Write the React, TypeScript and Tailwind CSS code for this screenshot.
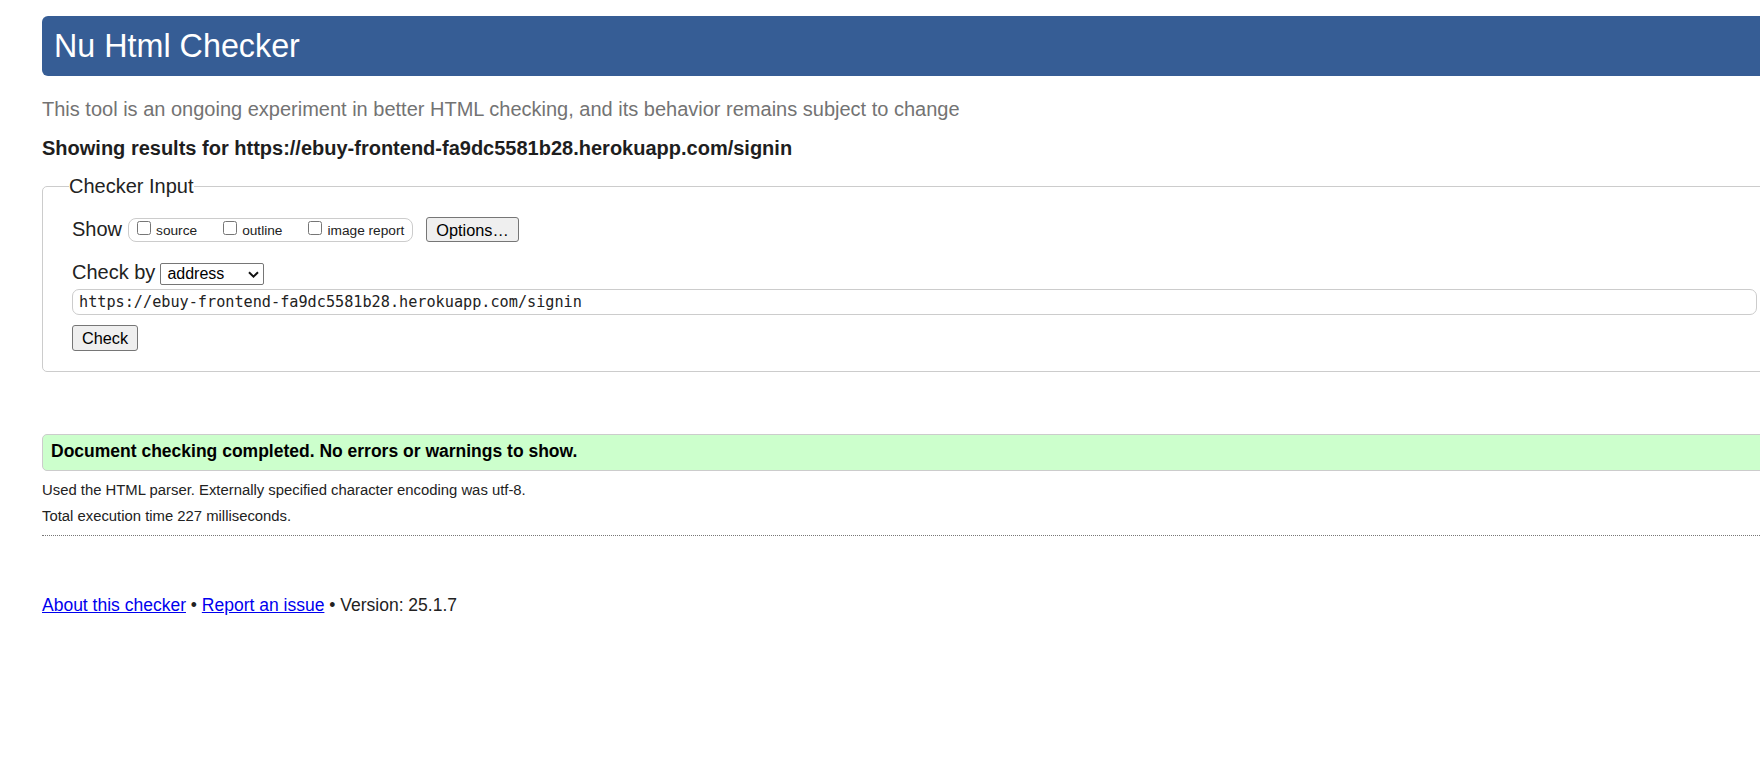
import { useState } from 'react';

const checkedUrl = 'https://ebuy-frontend-fa9dc5581b28.herokuapp.com/signin';

const showOptions = [
  { key: 'source', label: 'source' },
  { key: 'outline', label: 'outline' },
  { key: 'image', label: 'image report' },
];

const App = () => {
  const [show, setShow] = useState<Record<string, boolean>>({});
  const [checkBy, setCheckBy] = useState('address');
  const [doc, setDoc] = useState(checkedUrl);

  return (
    <div className="h-screen w-screen overflow-hidden bg-white font-['Liberation_Sans',Arial,sans-serif] text-[#222]">
      <div className="ml-[42px] w-[1742px] pt-[16px]">
        {/* Header */}
        <h1 className="flex h-[60px] items-center rounded-[6px] bg-[#365d95] pl-[12px] text-[32.3px] leading-[37px] font-normal text-white">
          Nu Html Checker
        </h1>
        <p className="mt-[22px] text-[20px] leading-[23px] text-[#737373]">
          This tool is an ongoing experiment in better HTML checking, and its behavior remains subject to change
        </p>
        <p className="mt-[16px] text-[20px] leading-[23px] font-bold text-[#1e1e1e]">
          Showing results for {checkedUrl}
        </p>

        {/* Checker Input */}
        <fieldset className="mt-[15px] rounded-[5px] border border-[#cccccc] px-[26px] pb-[20px]">
          <legend className="text-[20px] leading-[23px] text-[#222]">Checker Input</legend>
          <div className="pl-[3px] pt-[19px]">
            <div className="flex h-[25px] items-center">
              <span className="text-[20px] leading-[23px]">Show</span>
              <div className="ml-[6px] flex h-[24px] items-end gap-[26px] rounded-[8px] border border-[#cccccc] px-[8px] pb-[2px]">
                {showOptions.map((opt) => (
                  <label key={opt.key} className="flex items-end gap-[5px] text-[13.7px] leading-[16px]">
                    <input
                      type="checkbox"
                      className="mb-[4px] h-[14px] w-[14px]"
                      checked={!!show[opt.key]}
                      onChange={(e) => setShow({ ...show, [opt.key]: e.target.checked })}
                    />
                    {opt.label}
                  </label>
                ))}
              </div>
              <button className="ml-[13px] h-[25px] rounded-[3px] border border-[#767676] bg-[#efefef] px-[9px] text-[16.3px] leading-[18px] text-black">
                Options…
              </button>
            </div>

            <div className="mt-[19px] flex h-[23px] items-end">
              <span className="text-[20px] leading-[23px]">Check by</span>
              <div className="relative mb-[-1px] ml-[5px] flex">
                <select
                  value={checkBy}
                  onChange={(e) => setCheckBy(e.target.value)}
                  className="h-[22px] w-[104px] appearance-none rounded-[2px] border border-[#767676] bg-white pl-[6px] text-[16px] leading-[20px] text-black"
                >
                  <option value="address">address</option>
                  <option value="file">file upload</option>
                  <option value="text">text input</option>
                </select>
                <svg
                  className="pointer-events-none absolute right-[5px] top-[8px]"
                  width="11"
                  height="7"
                  viewBox="0 0 11 7"
                  fill="none"
                >
                  <path d="M1 1.2L5.5 5.6L10 1.2" stroke="#111" strokeWidth="2" />
                </svg>
              </div>
            </div>

            <input
              value={doc}
              onChange={(e) => setDoc(e.target.value)}
              className="mt-[5px] block h-[26px] w-full rounded-[7px] border border-[#cccccc] px-[6px] font-['DejaVu_Sans_Mono',monospace] text-[15.2px] text-[#222]"
            />

            <button className="mt-[10px] block h-[26px] rounded-[3px] border border-[#767676] bg-[#efefef] px-[9px] text-[16.3px] leading-[18px] text-black">
              Check
            </button>
          </div>
        </fieldset>

        {/* Results */}
        <div className="mt-[62px] h-[37px] rounded-[5px] border border-[#cccccc] bg-[#ccffcc] pl-[8px] pt-[6px]">
          <p className="text-[17.5px] leading-[20px] font-bold text-black">
            Document checking completed. No errors or warnings to show.
          </p>
        </div>
        <p className="mt-[7px] text-[14.85px] leading-[25.5px]">
          Used the HTML parser. Externally specified character encoding was utf-8.
        </p>
        <p className="text-[14.85px] leading-[25.5px]">Total execution time 227 milliseconds.</p>
        <div className="mt-[6px] border-t border-dotted border-[#777]"></div>

        {/* Footer */}
        <p className="mt-[59px] text-[17.5px] leading-[20px]">
          <a href="#about" className="text-[#0000ee] underline">About this checker</a>
          {' • '}
          <a href="#issue" className="text-[#0000ee] underline">Report an issue</a>
          {' • Version: 25.1.7'}
        </p>
      </div>
    </div>
  );
};

export default App;
